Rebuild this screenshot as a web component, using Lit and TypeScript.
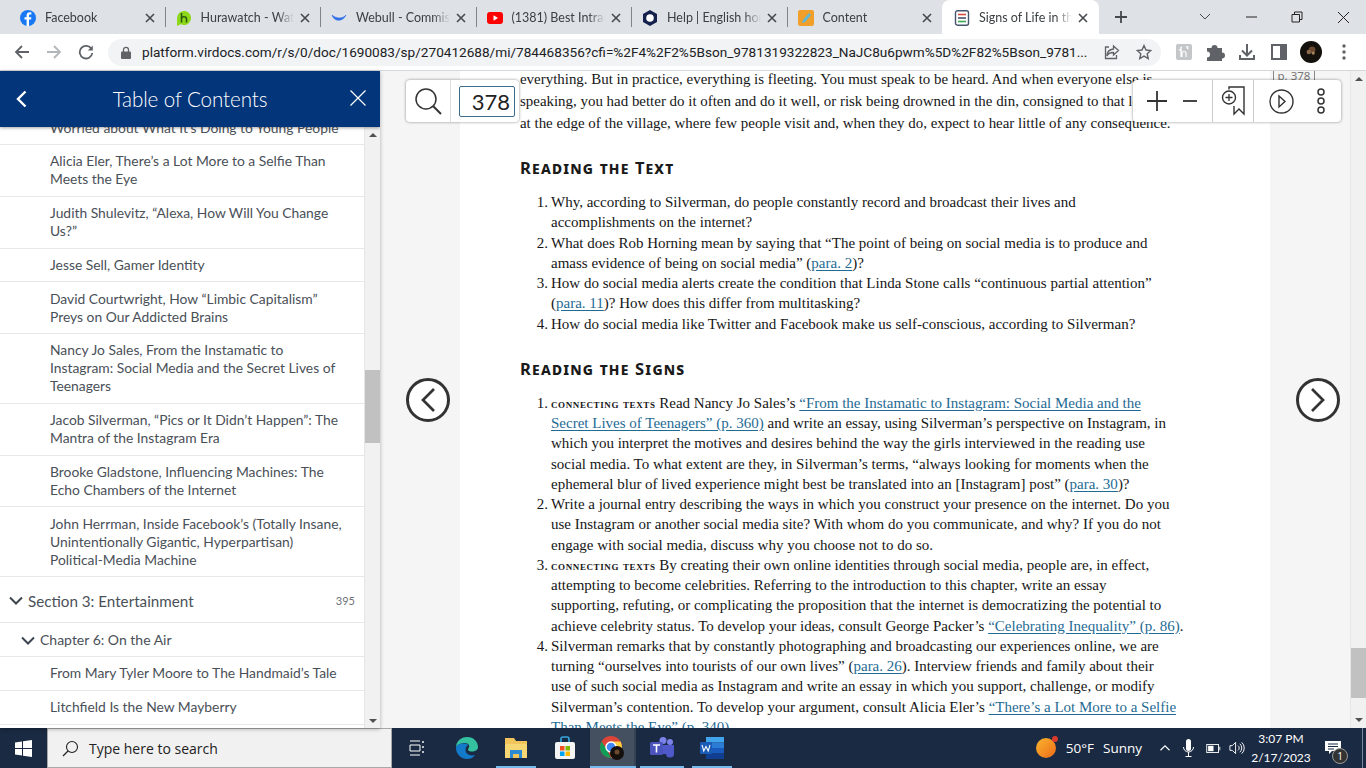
import { LitElement, html, css, svg } from 'lit';
import { customElement } from 'lit/decorators.js';

const closeX = svg`<path d="M1 1l8 8M9 1l-8 8" stroke="#45494d" stroke-width="1.6" fill="none"/>`;

const tabIcons = {
  fb: svg`<circle cx="8" cy="8" r="8" fill="#1877f2"/><path d="M9 16V9.600h2l.4-2.400H9V5.800c0-.8.3-1.200 1.200-1.200h1.200V2.500C11 2.400 10.400 2.300 9.700 2.300c-1.900 0-3.100 1.100-3.100 3.200v1.700H4.500v2.400h2.100V16z" fill="#fff"/>`,
  hw: svg`<path d="M1 8a7 7 0 1 1 4 6.300L1 16z" fill="#8ed81b"/><path d="M5.500 3v9.500M5.500 9c0-3 5-3 5 0v3.500" stroke="#2a5a12" stroke-width="1.600" fill="none"/>`,
  wb: svg`<path d="M1 5c2 7 11 7 14 0-3 4-10 4-14 0z" fill="#2f6fe8" stroke="#2f6fe8" stroke-width=".6"/>`,
  yt: svg`<rect x="0" y="2" width="16" height="12" rx="3" fill="#f00"/><path d="M6.500 5.300v5.400L11 8z" fill="#fff"/>`,
  help: svg`<path d="M8 0l7 4v8l-7 4-7-4V4z" fill="#14214d"/><circle cx="8" cy="8" r="3.800" fill="#fff"/>`,
  content: svg`<rect width="16" height="16" rx="2" fill="#f0a02a"/><path d="M4 13l1-3 6-7 2 2-6 7z" fill="#5fb8d8"/>`,
  signs: svg`<rect x="1.500" y=".8" width="13" height="14.400" rx="2" fill="#fff" stroke="#44546a" stroke-width="1.400"/><path d="M4 4.500h8" stroke="#d9483b" stroke-width="1.600"/><path d="M4 8h8" stroke="#44546a" stroke-width="1.600"/><path d="M4 11.500h8" stroke="#34a853" stroke-width="1.600"/>`,
};

const tabs = [
  { title: 'Facebook', icon: tabIcons.fb },
  { title: 'Hurawatch - Watch', icon: tabIcons.hw },
  { title: 'Webull - Commission', icon: tabIcons.wb },
  { title: '(1381) Best Intraday', icon: tabIcons.yt },
  { title: 'Help | English home', icon: tabIcons.help },
  { title: 'Content', icon: tabIcons.content },
  { title: 'Signs of Life in the', icon: tabIcons.signs, active: true },
];

@customElement('browser-chrome')
export class BrowserChrome extends LitElement {
  static styles = css`
    :host { display: block; font-family: 'Lato', 'Noto Sans', sans-serif; }
    .tabs { height: 34px; background: #dee1e6; display: flex; align-items: stretch; padding-left: 10px; position: relative; }
    .tab { width: 155.500px; box-sizing: border-box; flex: none; display: flex; align-items: center; padding: 1px 11px 0 10px; font-size: 12.500px; color: #3c4043; position: relative; white-space: nowrap; }
    .tab + .tab::before { content: ''; position: absolute; left: -1px; top: 7px; height: 20px; border-left: 1px solid #7f8489; }
    .tab svg.ico { width: 16px; height: 16px; flex: none; margin-right: 9px; }
    .tab .t { flex: 1; overflow: hidden; -webkit-mask-image: linear-gradient(90deg, #000 82%, transparent); mask-image: linear-gradient(90deg, #000 82%, transparent); }
    .tab svg.x { width: 10px; height: 10px; flex: none; margin-left: 6px; }
    .tab.active { background: #fff; border-radius: 8px 8px 0 0; margin-left: -1px; padding-left: 12px; width: 157px; }
    .tab.active::before, .tab.active + .tab::before { display: none; }
    .plus { width: 44px; display: flex; align-items: center; justify-content: center; flex: none; }
    .win { margin-left: auto; display: flex; align-items: center; }
    .win span { width: 46px; display: flex; justify-content: center; }
    .bar { height: 37px; background: #fff; display: flex; align-items: center; border-bottom: 1px solid #d5d7da; box-sizing: border-box; }
    .nav { width: 108px; flex: none; display: flex; padding-left: 14px; gap: 16px; box-sizing: border-box; }
    .nav svg { width: 16px; height: 16px; }
    .url { width: 1053px; height: 27px; flex: none; background: #f1f3f4; border-radius: 14px; display: flex; align-items: center; padding: 0 0 0 13px; box-sizing: border-box; font-family: 'Roboto', sans-serif; font-size: 13.600px; color: #202124; }
    .url .lock { width: 10px; height: 13px; margin-right: 11px; flex: none; }
    .url .addr { flex: 1; white-space: nowrap; overflow: hidden; }
    .url .act { display: flex; gap: 16px; padding-right: 9px; }
    .url .act svg { width: 16px; height: 16px; }
    .ext { flex: 1; display: flex; align-items: center; justify-content: space-around; padding: 0 6px 0 7px; }
    .ext svg { width: 20px; height: 20px; display: block; }
  `;
  render() {
    return html`
      <div class="tabs">
        ${tabs.map(
          t => html`<div class="tab ${t.active ? 'active' : ''}">
            <svg class="ico" viewBox="0 0 16 16">${t.icon}</svg>
            <span class="t">${t.title}</span>
            <svg class="x" viewBox="0 0 10 10">${closeX}</svg>
          </div>`
        )}
        <div class="plus"><svg width="14" height="14" viewBox="0 0 14 14"><path d="M7 1v12M1 7h12" stroke="#45494d" stroke-width="1.800"/></svg></div>
        <div class="win">
          <span><svg width="12" height="8" viewBox="0 0 12 8"><path d="M1 1l5 5 5-5" stroke="#45494d" fill="none"/></svg></span>
          <span><svg width="11" height="2" viewBox="0 0 11 2"><path d="M0 1h11" stroke="#222" /></svg></span>
          <span><svg width="12" height="12" viewBox="0 0 12 12"><path d="M3.500 3V1h7.500v7.500h-2M1 3.500h7.500V11H1z" stroke="#222" fill="none"/></svg></span>
          <span><svg width="13" height="13" viewBox="0 0 13 13"><path d="M1 1l11 11M12 1L1 12" stroke="#222" fill="none"/></svg></span>
        </div>
      </div>
      <div class="bar">
        <div class="nav">
          <svg viewBox="0 0 16 16"><path d="M15 8H2M8 2L2 8l6 6" stroke="#5f6368" stroke-width="1.800" fill="none"/></svg>
          <svg viewBox="0 0 16 16"><path d="M1 8h13M8 2l6 6-6 6" stroke="#b4b7ba" stroke-width="1.800" fill="none"/></svg>
          <svg viewBox="0 0 16 16"><path d="M13.500 5A6.300 6.300 0 1 0 14.300 9" stroke="#5f6368" stroke-width="1.800" fill="none"/><path d="M14.800 1.500v5h-5z" fill="#5f6368"/></svg>
        </div>
        <div class="url">
          <svg class="lock" viewBox="0 0 10 13"><path d="M2.500 6V3.800a2.500 2.500 0 0 1 5 0V6" stroke="#5f6368" stroke-width="1.300" fill="none"/><rect y="5.500" width="10" height="7.500" rx="1" fill="#5f6368"/></svg>
          <span class="addr">platform.virdocs.com/r/s/0/doc/1690083/sp/270412688/mi/784468356?cfi=%2F4%2F2%5Bson_9781319322823_NaJC8u6pwm%5D%2F82%5Bson_9781...</span>
          <div class="act">
            <svg viewBox="0 0 16 16"><path d="M9.500 2l5 4.500-5 4.500V8.500C6 8.500 4 9.500 3 12c0-4 2.500-6.500 6.500-7zM5 3H1.500v11.500h11V11" stroke="#5f6368" stroke-width="1.300" fill="none"/></svg>
            <svg viewBox="0 0 16 16"><path d="M8 1.500l2 4.500 4.800.5-3.600 3.200 1 4.800L8 12.100 3.800 14.500l1-4.800L1.200 6.500 6 6z" stroke="#5f6368" stroke-width="1.400" fill="none"/></svg>
          </div>
        </div>
        <div class="ext">
          <svg viewBox="0 0 20 20"><rect x="2" y="2" width="16" height="16" rx="2" fill="#c4c6c8"/><path d="M8 5c-1.500 0-1.500 1.500-1 2v8M4.500 8H8M8 15v-4c0-2 4-2 4 0v4M12 5c2-1 3 1 1 2" stroke="#fff" stroke-width="1.200" fill="none"/></svg>
          <svg viewBox="0 0 20 20"><path d="M2 6h4.500a3 3 0 0 1 6 0H17v4.500a3 3 0 0 1 0 6V19H2v-3.500a3 3 0 0 0 0-6z" fill="#5f6368"/></svg>
          <svg viewBox="0 0 20 20"><path d="M10 2v11M5 8.500l5 5 5-5" stroke="#5f6368" stroke-width="2" fill="none"/><path d="M3 13v4h14v-4" stroke="#5f6368" stroke-width="2" fill="none"/></svg>
          <svg viewBox="0 0 20 20"><rect x="3" y="3" width="14" height="14" fill="none" stroke="#5f6368" stroke-width="2"/><rect x="11" y="3" width="6" height="14" fill="#5f6368"/></svg>
          <svg viewBox="0 0 20 20" style="width:22px;height:22px"><circle cx="10" cy="10" r="10" fill="#14100c"/><circle cx="11" cy="8" r="3" fill="#6b4a30"/><circle cx="8" cy="10" r="2" fill="#8a6a4a"/><circle cx="12" cy="11" r="1.500" fill="#a8805a"/></svg>
          <svg viewBox="0 0 20 20"><circle cx="10" cy="4" r="1.700" fill="#5f6368"/><circle cx="10" cy="10" r="1.700" fill="#5f6368"/><circle cx="10" cy="16" r="1.700" fill="#5f6368"/></svg>
        </div>
      </div>
    `;
  }
}

const chevDown = svg`<path d="M1 1.500l6 6 6-6" stroke="#3d4650" stroke-width="2" fill="none"/>`;

const tocItems = [
  ['Alicia Eler, There’s a Lot More to a Selfie Than', 'Meets the Eye'],
  ['Judith Shulevitz, “Alexa, How Will You Change', 'Us?”'],
  ['Jesse Sell, Gamer Identity'],
  ['David Courtwright, How “Limbic Capitalism”', 'Preys on Our Addicted Brains'],
  ['Nancy Jo Sales, From the Instamatic to', 'Instagram: Social Media and the Secret Lives of', 'Teenagers'],
  ['Jacob Silverman, “Pics or It Didn’t Happen”: The', 'Mantra of the Instagram Era'],
  ['Brooke Gladstone, Influencing Machines: The', 'Echo Chambers of the Internet'],
  ['John Herrman, Inside Facebook’s (Totally Insane,', 'Unintentionally Gigantic, Hyperpartisan)', 'Political-Media Machine'],
];

@customElement('toc-panel')
export class TocPanel extends LitElement {
  static styles = css`
    :host { display: flex; flex-direction: column; width: 380px; flex: none; height: 100%; font-family: 'Lato', 'Noto Sans', sans-serif; background: #fff; overflow: hidden; box-shadow: 0 1px 4px rgba(0,0,0,.3); position: relative; z-index: 2; }
    .head { height: 56px; flex: none; background: #03357a; color: #fff; display: flex; align-items: center; justify-content: space-between; padding: 0 14px 0 15px; position: relative; z-index: 1; box-shadow: 0 1px 3px rgba(0,0,0,.35); }
    .head h2 { margin: 0 0 0 3px; font-weight: 300; font-size: 20.600px; letter-spacing: -.1px; }
    .wrap { flex: 1; display: flex; min-height: 0; }
    .list { flex: 1; overflow: hidden; color: #4a5058; font-size: 13.850px; line-height: 18px; }
    .item { padding: 7.375px 4px 7.375px 50px; border-bottom: 1px solid #e8e8e8; white-space: nowrap; }
    .item.first { height: 9px; padding: 0 0 8px 50px; position: relative; overflow: hidden; }
    .item.first span { position: absolute; top: -8px; }
    .sec { height: 46px; box-sizing: border-box; display: flex; align-items: center; padding: 2px 0 0 9px; font-size: 15.200px; border-bottom: 1px solid #e8e8e8; }
    .sec svg { width: 14px; height: 9px; margin-right: 5px; flex: none; }
    .sec b { font-weight: 400; margin-left: auto; margin-right: 9px; font-size: 11px; color: #6e7278; }
    .chap { height: 34px; box-sizing: border-box; display: flex; align-items: center; padding: 1px 0 0 21px; font-size: 14px; border-bottom: 1px solid #e8e8e8; }
    .chap svg { width: 14px; height: 9px; margin-right: 5px; }
    .sb { width: 16px; flex: none; background: #f1f1f1; border-left: 1px solid #e6e6e6; box-sizing: border-box; display: flex; flex-direction: column; align-items: center; padding-bottom: 5px; }
    .up { margin-top: 6px; width: 0; height: 0; border-left: 4px solid transparent; border-right: 4px solid transparent; border-bottom: 4px solid #505050; }
    .thumb { width: 100%; height: 73px; background: #c1c1c1; margin-top: 233px; }
    .arr { margin-top: auto; width: 0; height: 0; border-left: 4px solid transparent; border-right: 4px solid transparent; border-top: 4px solid #505050; }
  `;
  render() {
    return html`
      <div class="head">
        <svg width="12" height="18" viewBox="0 0 12 18"><path d="M10.500 1.500L3 9l7.500 7.500" stroke="#fff" stroke-width="2.400" fill="none"/></svg>
        <h2>Table of Contents</h2>
        <svg width="16" height="16" viewBox="0 0 16 16" style="margin-bottom:2px"><path d="M.5.500l15 15M15.500.500l-15 15" stroke="#fff" stroke-width="1.200" fill="none"/></svg>
      </div>
      <div class="wrap">
        <div class="list">
          <div class="item first"><span>Worried about What It’s Doing to Young People</span></div>
          ${tocItems.map(lines => html`<div class="item">${lines.map(l => html`<div>${l}</div>`)}</div>`)}
          <div class="sec"><svg viewBox="0 0 14 9">${chevDown}</svg>Section 3: Entertainment<b>395</b></div>
          <div class="chap"><svg viewBox="0 0 14 9">${chevDown}</svg>Chapter 6: On the Air</div>
          <div class="item">From Mary Tyler Moore to The Handmaid’s Tale</div>
          <div class="item">Litchfield Is the New Mayberry</div>
        </div>
        <div class="sb"><div class="up"></div><div class="thumb"></div><div class="arr"></div></div>
      </div>
    `;
  }
}

const ct = html`<span class="ct">connecting texts</span>`;

@customElement('reader-page')
export class ReaderPage extends LitElement {
  static styles = css`
    :host { display: flex; flex: 1; min-width: 0; height: 100%; background: #f5f5f5; position: relative; overflow: hidden; }
    .gutter { width: 80px; flex: none; }
    .page { width: 810px; flex: none; background: #fff; box-sizing: border-box; padding: 0 60px; overflow: hidden; font-family: 'Liberation Serif', serif; color: #161616; white-space: nowrap; }
    .intro { margin-top: -3px; font-size: 14.930px; line-height: 22px; }
    h3 { font-family: 'Noto Sans', sans-serif; font-variant: small-caps; font-size: 16.500px; font-weight: 700; letter-spacing: 1.200px; margin: 0; line-height: 22px; color: #1a1a1a; }
    .h1 { margin-top: 23px; }
    .h2 { margin-top: 24px; }
    ol { list-style: none; margin: 13px 0 0; padding: 0; font-size: 15px; line-height: 20.250px; }
    li { display: grid; grid-template-columns: 28px 1fr; column-gap: 3px; }
    li > span:first-child { text-align: right; }
    a { color: #1f6b94; text-decoration: underline; text-underline-offset: 2px; }
    .ct { font-variant: small-caps; font-weight: 700; font-size: 13.500px; line-height: 1; letter-spacing: .6px; }
    .sb { width: 16px; flex: none; background: #f1f1f1; box-sizing: border-box; border-left: 1px solid #e6e6e6; display: flex; flex-direction: column; align-items: center; padding-bottom: 6px; }
    .up { margin-top: 6px; width: 0; height: 0; border-left: 4px solid transparent; border-right: 4px solid transparent; border-bottom: 4px solid #505050; }
    .down { margin-top: auto; width: 0; height: 0; border-left: 4px solid transparent; border-right: 4px solid transparent; border-top: 4px solid #505050; }
    .thumb { width: 100%; height: 50px; background: #c1c1c1; margin-top: 567px; }
    .pno { position: absolute; left: 893px; top: 0; height: 9px; overflow: hidden; font: 11.500px/10px 'Noto Sans', sans-serif; color: #777; border-left: 1px solid #888; border-right: 1px solid #888; width: 40px; text-align: center; white-space: nowrap; }
    .float { position: absolute; top: 9px; height: 42px; background: #fff; border-radius: 4px; box-shadow: 0 0 3px rgba(0,0,0,.45); display: flex; align-items: center; box-sizing: border-box; }
    .search { left: 26px; width: 113px; }
    .mag { width: 45px; display: flex; justify-content: center; border-right: 1px solid #ddd; height: 100%; align-items: center; box-sizing: border-box; }
    .num { margin-left: 8px; width: 56px; height: 31px; box-sizing: border-box; border: 1px solid #3a6d8c; border-radius: 2px; font: 22px/29px 'Lato', sans-serif; text-align: right; padding-right: 4px; color: #222; }
    .tools { left: 753px; width: 208px; }
    .z { width: 80px; height: 100%; display: flex; align-items: center; justify-content: space-around; padding: 0 7px 0 6px; box-sizing: border-box; border-right: 1px solid #ccc; }
    .bm { width: 40px; height: 100%; display: flex; align-items: center; justify-content: center; border-right: 1px solid #ccc; }
    .pl { flex: 1; display: flex; align-items: center; padding-left: 15px; gap: 22px; }
    .circ { position: absolute; top: 307px; width: 44px; height: 44px; box-sizing: border-box; border: 3px solid #333; border-radius: 50%; background: #fff; display: flex; align-items: center; justify-content: center; }
    .circ.l { left: 26px; }
    .circ.r { left: 916px; }
  `;
  render() {
    return html`
      <div class="gutter"></div>
      <div class="page">
        <div class="intro">
          everything. But in practice, everything is fleeting. You must speak to be heard. And when everyone else is<br />
          speaking, you had better do it often and do it well, or risk being drowned in the din, consigned to that lonely hut<br />
          at the edge of the village, where few people visit and, when they do, expect to hear little of any consequence.
        </div>
        <h3 class="h1">Reading the Text</h3>
        <ol>
          <li><span>1.</span><span>Why, according to Silverman, do people constantly record and broadcast their lives and<br />accomplishments on the internet?</span></li>
          <li><span>2.</span><span>What does Rob Horning mean by saying that “The point of being on social media is to produce and<br />amass evidence of being on social media” (<a>para. 2</a>)?</span></li>
          <li><span>3.</span><span>How do social media alerts create the condition that Linda Stone calls “continuous partial attention”<br />(<a>para. 11</a>)? How does this differ from multitasking?</span></li>
          <li><span>4.</span><span>How do social media like Twitter and Facebook make us self-conscious, according to Silverman?</span></li>
        </ol>
        <h3 class="h2">Reading the Signs</h3>
        <ol>
          <li><span>1.</span><span>${ct} Read Nancy Jo Sales’s <a>“From the Instamatic to Instagram: Social Media and the<br />Secret Lives of Teenagers” (p. 360)</a> and write an essay, using Silverman’s perspective on Instagram, in<br />which you interpret the motives and desires behind the way the girls interviewed in the reading use<br />social media. To what extent are they, in Silverman’s terms, “always looking for moments when the<br />ephemeral blur of lived experience might best be translated into an [Instagram] post” (<a>para. 30</a>)?</span></li>
          <li><span>2.</span><span>Write a journal entry describing the ways in which you construct your presence on the internet. Do you<br />use Instagram or another social media site? With whom do you communicate, and why? If you do not<br />engage with social media, discuss why you choose not to do so.</span></li>
          <li><span>3.</span><span>${ct} By creating their own online identities through social media, people are, in effect,<br />attempting to become celebrities. Referring to the introduction to this chapter, write an essay<br />supporting, refuting, or complicating the proposition that the internet is democratizing the potential to<br />achieve celebrity status. To develop your ideas, consult George Packer’s <a>“Celebrating Inequality” (p. 86)</a>.</span></li>
          <li><span>4.</span><span>Silverman remarks that by constantly photographing and broadcasting our experiences online, we are<br />turning “ourselves into tourists of our own lives” (<a>para. 26</a>). Interview friends and family about their<br />use of such social media as Instagram and write an essay in which you support, challenge, or modify<br />Silverman’s contention. To develop your argument, consult Alicia Eler’s <a>“There’s a Lot More to a Selfie<br />Than Meets the Eye” (p. 340)</a>.</span></li>
        </ol>
      </div>
      <div class="gutter"></div>
      <div class="sb"><div class="up"></div><div class="thumb"></div><div class="down"></div></div>
      <div class="pno">p. 378</div>
      <div class="float search">
        <div class="mag"><svg width="30" height="30" viewBox="0 0 30 30"><circle cx="13" cy="13" r="10" stroke="#333" stroke-width="1.500" fill="none"/><path d="M20 20l8 8" stroke="#333" stroke-width="2"/></svg></div>
        <div class="num">378</div>
      </div>
      <div class="float tools">
        <div class="z">
          <svg width="22" height="22" viewBox="0 0 22 22"><path d="M11 1v20M1 11h20" stroke="#333" stroke-width="1.800"/></svg>
          <svg width="16" height="4" viewBox="0 0 16 4"><path d="M1 2h14" stroke="#333" stroke-width="1.800"/></svg>
        </div>
        <div class="bm"><svg width="24" height="30" viewBox="0 0 24 30"><path d="M8 3.500V1h15v27l-5-5-5 5V20" stroke="#333" stroke-width="1.400" fill="none"/><circle cx="8" cy="11.500" r="6.500" stroke="#333" stroke-width="1.400" fill="#fff"/><path d="M8 8v7M4.500 11.500h7" stroke="#333" stroke-width="1.300"/></svg></div>
        <div class="pl">
          <svg width="25" height="25" viewBox="0 0 25 25"><circle cx="12.500" cy="12.500" r="11.500" stroke="#333" stroke-width="1.400" fill="none"/><path d="M10 7l6 5.500-6 5.500z" stroke="#333" stroke-width="1.400" fill="none"/></svg>
          <svg width="10" height="28" viewBox="0 0 10 28"><circle cx="5" cy="5" r="3" stroke="#333" stroke-width="1.500" fill="none"/><circle cx="5" cy="14" r="3" stroke="#333" stroke-width="1.500" fill="none"/><circle cx="5" cy="23" r="3" stroke="#333" stroke-width="1.500" fill="none"/></svg>
        </div>
      </div>
      <div class="circ l"><svg width="16" height="26" viewBox="0 0 16 26"><path d="M14 2L3 13l11 11" stroke="#333" stroke-width="2.700" fill="none"/></svg></div>
      <div class="circ r"><svg width="16" height="26" viewBox="0 0 16 26"><path d="M2 2l11 11L2 24" stroke="#333" stroke-width="2.700" fill="none"/></svg></div>
    `;
  }
}

@customElement('task-bar')
export class TaskBar extends LitElement {
  static styles = css`
    :host { display: flex; height: 40px; flex: none; background: #1a2a42; align-items: stretch; font-family: 'Open Sans', 'Noto Sans', sans-serif; color: #fff; }
    .start { width: 47px; display: flex; align-items: center; justify-content: center; flex: none; }
    .search { width: 345px; flex: none; background: #f1f1f1; border: 1px solid #a8a8a8; box-sizing: border-box; display: flex; align-items: center; padding-left: 14px; gap: 10px; color: #222; font-size: 14px; }
    .apps { display: flex; }
    .app { display: flex; align-items: center; justify-content: center; box-sizing: border-box; position: relative; }
    .app.run::after { content: ''; position: absolute; left: 4px; right: 4px; bottom: 0; height: 2px; background: #76b9ed; }
    .app.cur { background: #44505f; border-right: 2px solid #364356; }
    .app.cur::after { left: 0; right: -2px; }
    .tray { margin-left: auto; display: flex; align-items: center; }
    .wx { font-size: 13.500px; white-space: nowrap; margin-left: 8px; }
    .wx i { font-style: normal; margin-left: 9px; }
    .sys { display: flex; align-items: center; margin-left: 17px; }
    .clock { font-family: 'Lato', sans-serif; font-size: 12px; text-align: center; line-height: 19px; margin-left: 6px; width: 60px; }
    .note { width: 40px; margin-left: 2px; position: relative; display: flex; justify-content: center; }
    .badge { position: absolute; left: 19px; top: 7px; width: 16px; height: 16px; border-radius: 50%; border: 1px solid #999; background: #333; box-sizing: border-box; font-size: 10px; line-height: 14px; text-align: center; }
    .edge { width: 4px; height: 100%; margin-left: 9px; border-left: 1px solid #7c8798; box-sizing: border-box; }
  `;
  render() {
    return html`
      <div class="start"><svg width="17" height="17" viewBox="0 0 17 17"><path d="M0 2.400l7-1v6.600H0zM8 1.300L17 0v8H8zM0 9h7v6.600l-7-1zM8 9h9v8l-9-1.300z" fill="#fff"/></svg></div>
      <div class="search">
        <svg width="17" height="17" viewBox="0 0 17 17"><circle cx="10" cy="7" r="5.500" stroke="#222" fill="none" stroke-width="1.100"/><path d="M6 11l-5 5" stroke="#222" stroke-width="1.200"/></svg>
        <span>Type here to search</span>
      </div>
      <div class="apps">
        <div class="app" style="width:49px"><svg width="18" height="18" viewBox="0 0 18 18"><path d="M2 2h10M2 16h10M2 6h10v6H2z" stroke="#fff" fill="none"/><path d="M15 2v2M15 7v2M15 12v2" stroke="#fff" stroke-width="1.400"/></svg></div>
        <div class="app" style="width:51px"><svg width="24" height="24" viewBox="0 0 24 24"><path d="M1 12C1 5 6 1 12 1c7 0 11 5 11 10 0 3-3 4.500-6 4.500-2 0-4-.5-4-2 0-1 1.200-1.500 1.200-3.500S12 7 9.500 7C5 7 1 10 1 12z" fill="#35c1a0"/><path d="M1 12c0 6 5 11 11 11 3 0 6-1 8-4-3 1-6 .5-8-1.500-2.500-2.500-1.500-7.500 1.500-8.500C8 6 1 8 1 12z" fill="#1379c9"/></svg></div>
        <div class="app run" style="width:48px"><svg width="24" height="22" viewBox="0 0 24 22"><path d="M1 1h9l2 3h11v17H1z" fill="#f2c55c"/><path d="M1 7h22v14H1z" fill="#f7d774"/><path d="M6 21v-8h12v8" fill="#2a8ad4"/><path d="M9 21v-4h6v4" fill="#f2c55c"/></svg></div>
        <div class="app" style="width:49.500px"><svg width="22" height="24" viewBox="0 0 22 24"><path d="M7 6V3a2 2 0 0 1 2-2h4a2 2 0 0 1 2 2v3" stroke="#35a8e0" stroke-width="1.600" fill="none"/><rect x="1" y="6" width="20" height="17" rx="2" fill="#f4f4f4"/><rect x="6" y="10" width="4.500" height="4.500" fill="#f25022"/><rect x="11.500" y="10" width="4.500" height="4.500" fill="#7fba00"/><rect x="6" y="15.500" width="4.500" height="4.500" fill="#00a4ef"/><rect x="11.500" y="15.500" width="4.500" height="4.500" fill="#ffb900"/></svg></div>
        <div class="app run cur" style="width:46.500px"><svg width="26" height="26" viewBox="0 0 26 26"><circle cx="12" cy="12" r="11" fill="#db4437"/><path d="M12 23A11 11 0 0 1 2.500 6.500L8 15z" fill="#0f9d58"/><path d="M12 23a11 11 0 0 0 9.500-16.500H12l4 8z" fill="#ffcd40"/><circle cx="12" cy="12" r="5" fill="#4285f4" stroke="#fff" stroke-width="1.500"/><circle cx="18" cy="18" r="7" fill="#15100c"/><circle cx="18" cy="17" r="2.500" fill="#6b4a30"/></svg></div>
        <div class="app run" style="width:52px"><svg width="26" height="24" viewBox="0 0 26 24"><circle cx="21" cy="6" r="3" fill="#7b83eb"/><circle cx="14" cy="4.500" r="3.500" fill="#7b83eb"/><path d="M12 9h13v8a4 4 0 0 1-8 1h-5z" fill="#5059c9"/><rect x="1" y="6" width="13" height="13" rx="1.500" fill="#4b53bc"/><path d="M4 9h7M7.500 9v7.500" stroke="#fff" stroke-width="1.600"/></svg></div>
        <div class="app run" style="width:48px"><svg width="24" height="22" viewBox="0 0 24 22"><rect x="6" y="0" width="18" height="5.500" fill="#41a5ee"/><rect x="6" y="5.500" width="18" height="5.500" fill="#2b7cd3"/><rect x="6" y="11" width="18" height="5.500" fill="#185abd"/><rect x="6" y="16.500" width="18" height="5.500" fill="#103f91"/><rect x="0" y="5" width="12" height="12" rx="1" fill="#1a5bb5"/><path d="M2 8l1.800 6L6 9.500 8.200 14 10 8" stroke="#fff" stroke-width="1.100" fill="none"/></svg></div>
      </div>
      <div class="tray">
        <svg width="24" height="24" viewBox="0 0 24 24"><defs><linearGradient id="sun" x1="0" y1="0" x2="1" y2="1"><stop offset="0" stop-color="#f8b62d"/><stop offset="1" stop-color="#ef6a1a"/></linearGradient></defs><circle cx="12" cy="12" r="10" fill="url(#sun)"/><circle cx="21" cy="3" r="3" fill="#d93a2b"/></svg>
        <span class="wx">50°F<i>Sunny</i></span>
        <div class="sys">
          <svg width="12" height="8" viewBox="0 0 16 10"><path d="M2 8l6-6 6 6" stroke="#fff" stroke-width="1.500" fill="none"/></svg>
          <svg width="11" height="18" viewBox="0 0 11 18" style="margin-left:12px"><rect x="3" y="0" width="5" height="12" rx="2.500" fill="#fff"/><path d="M.5 8a5 5 0 0 0 10 0M5.500 13v4M2.500 17.500h6" stroke="#fff" fill="none"/></svg>
          <svg width="15" height="9" viewBox="0 0 16 10" style="margin-left:12px"><rect x=".5" y=".5" width="13" height="9" stroke="#fff" fill="none"/><rect x="2" y="2" width="6" height="6" fill="#fff"/><path d="M15 3v4" stroke="#fff"/></svg>
          <svg width="16" height="14" viewBox="0 0 17 14" style="margin-left:8px"><path d="M1 4.500h2.500L7 1v12L3.500 9.500H1zM9.500 4.500a3 3 0 0 1 0 5M11.500 2.500a6 6 0 0 1 0 9M13.500 1a8 8 0 0 1 0 12" stroke="#fff" fill="none"/></svg>
        </div>
        <div class="clock">3:07 PM<br />2/17/2023</div>
        <div class="note"><svg width="16" height="14" viewBox="0 0 16 14"><path d="M0 0h16v10H7l-3 3v-3H0z" fill="#fff"/><path d="M3 3h10M3 5.500h10M3 8h6" stroke="#1a2a42"/></svg><div class="badge">1</div></div>
        <div class="edge"></div>
      </div>
    `;
  }
}

@customElement('app-root')
export class AppRoot extends LitElement {
  static styles = css`
    :host { display: flex; flex-direction: column; width: 1366px; height: 768px; overflow: hidden; }
    .main { flex: 1; min-height: 0; display: flex; }
  `;
  render() {
    return html`
      <browser-chrome></browser-chrome>
      <div class="main"><toc-panel></toc-panel><reader-page></reader-page></div>
      <task-bar></task-bar>
    `;
  }
}
